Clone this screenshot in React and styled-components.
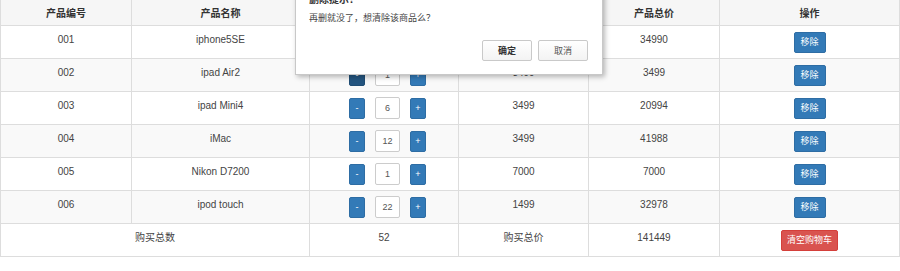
import React, { useState } from "react";
import styled, { createGlobalStyle } from "styled-components";

const GlobalStyle = createGlobalStyle`
  body {
    margin: 0;
    background: #fff;
    font-family: "Liberation Sans", Arial, "Noto Sans CJK SC", sans-serif;
    color: #444;
  }
`

const Page = styled.div`
  position: relative;
  width: 900px;
  height: 271px;
  overflow: hidden;
`

const Table = styled.table`
  width: 899px;
  border-collapse: collapse;
  table-layout: fixed;
  font-size: 10px;
`

const Th = styled.th`
  background: #f6f6f6;
  color: #333;
  font-weight: bold;
  text-align: center;
  line-height: 17px;
  padding: 5px 5px 3px;
  border: 1px solid #ddd;
  border-top: none;
`

const Row = styled.tr`
  background: ${props => (props.$striped ? "#f9f9f9" : "#fff")};
`

const Td = styled.td`
  text-align: center;
  vertical-align: top;
  line-height: 17px;
  padding: 5px;
  border: 1px solid #ddd;
`

const Controls = styled.div`
  display: flex;
  align-items: center;
  justify-content: center;
  gap: 10px;
  height: 22px;
  padding-left: ${props => props.$shift || 0}px;
`

const Btn = styled.button`
  display: inline-flex;
  align-items: center;
  justify-content: center;
  height: 21px;
  width: ${props => props.$w}px;
  padding: 0;
  border: 1px solid ${props => (props.$danger ? "#d43f3a" : props.$active ? "#204d74" : "#2e6da4")};
  border-radius: 2px;
  background: ${props => (props.$danger ? "#d9534f" : props.$active ? "#245580" : "#337ab7")};
  color: #fff;
  font-family: inherit;
  font-size: 9px;
  line-height: 1;
  cursor: pointer;
`

const QtyInput = styled.div`
  width: 25px;
  height: 22px;
  box-sizing: border-box;
  border: 1px solid #ccc;
  border-radius: 2px;
  background: #fff;
  color: #555;
  font-size: 9px;
  display: flex;
  align-items: center;
  justify-content: center;
`

const Dialog = styled.div`
  position: absolute;
  left: 295px;
  top: -19px;
  width: 308px;
  box-sizing: border-box;
  padding: 11px 14px 13px 13px;
  background: #fff;
  border: 1px solid #c8c8c8;
  box-shadow: 2px 2px 5px rgba(0, 0, 0, 0.28);
`

const DialogTitle = styled.div`
  font-size: 10px;
  font-weight: bold;
  color: #333;
  line-height: 14px;
  margin-bottom: 4px;
`

const DialogText = styled.div`
  font-size: 9px;
  color: #444;
  line-height: 14px;
`

const DialogFooter = styled.div`
  display: flex;
  justify-content: flex-end;
  gap: 6px;
  margin-top: 15px;
`

const DialogBtn = styled.button`
  width: 50px;
  height: 21px;
  padding: 0;
  border: 1px solid #c9c9c9;
  border-radius: 2px;
  background: linear-gradient(#fff, #f3f3f3);
  font-family: inherit;
  font-size: 9px;
  font-weight: ${props => (props.$primary ? "bold" : "normal")};
  color: ${props => (props.$primary ? "#333" : "#555")};
`

const products = [
  { id: "001", name: "iphone5SE", qty: 10, price: 3499 },
  { id: "002", name: "ipad Air2", qty: 1, price: 3499 },
  { id: "003", name: "ipad Mini4", qty: 6, price: 3499 },
  { id: "004", name: "iMac", qty: 12, price: 3499 },
  { id: "005", name: "Nikon D7200", qty: 1, price: 7000 },
  { id: "006", name: "ipod touch", qty: 22, price: 1499 },
];

export default function App() {
  const [list] = useState(products);

  const totalQty = list.reduce((s, p) => s + p.qty, 0);
  const totalPrice = list.reduce((s, p) => s + p.qty * p.price, 0);

  return (
    <Page>
      <GlobalStyle />
      <Table>
        <colgroup>
          <col style={{ width: 131 }} />
          <col style={{ width: 178 }} />
          <col style={{ width: 149 }} />
          <col style={{ width: 130 }} />
          <col style={{ width: 131 }} />
          <col style={{ width: 180 }} />
        </colgroup>
        <thead>
          <tr>
            <Th>产品编号</Th>
            <Th>产品名称</Th>
            <Th>购买数量</Th>
            <Th>产品单价</Th>
            <Th>产品总价</Th>
            <Th>操作</Th>
          </tr>
        </thead>
        <tbody>
          {list.map((p, i) => (
            <Row key={p.id} $striped={i % 2 === 1}>
              <Td>{p.id}</Td>
              <Td>{p.name}</Td>
              <Td>
                <Controls $shift={7}>
                  <Btn $w={16} $active={i === 1}>-</Btn>
                  <QtyInput>{p.qty}</QtyInput>
                  <Btn $w={16}>+</Btn>
                </Controls>
              </Td>
              <Td>{p.price}</Td>
              <Td>{p.qty * p.price}</Td>
              <Td>
                <Controls>
                  <Btn $w={32}>移除</Btn>
                </Controls>
              </Td>
            </Row>
          ))}
          <Row>
            <Td colSpan={2}>购买总数</Td>
            <Td>{totalQty}</Td>
            <Td>购买总价</Td>
            <Td>{totalPrice}</Td>
            <Td>
              <Controls>
                <Btn $w={57} $danger>清空购物车</Btn>
              </Controls>
            </Td>
          </Row>
        </tbody>
      </Table>

      <Dialog>
        <DialogTitle>删除提示！</DialogTitle>
        <DialogText>再删就没了，想清除该商品么？</DialogText>
        <DialogFooter>
          <DialogBtn $primary>确定</DialogBtn>
          <DialogBtn>取消</DialogBtn>
        </DialogFooter>
      </Dialog>
    </Page>
  );
}
